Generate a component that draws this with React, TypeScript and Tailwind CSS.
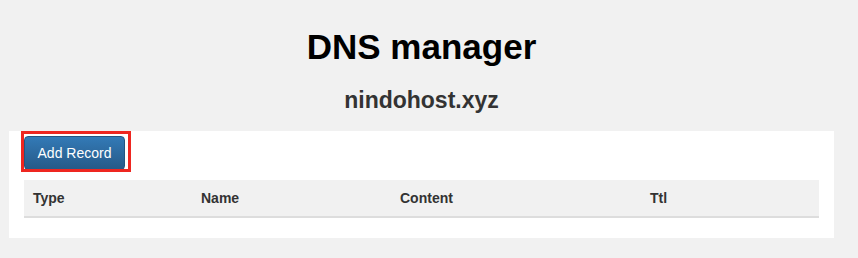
export default function App() {
  const cols = ['Type', 'Name', 'Content', 'Ttl'];

  return (
    <main className="min-h-[258px] bg-[#f1f1f1] font-['Liberation_Sans',Arial,sans-serif] text-[#333]">
      <div className="w-[843px]">
        <h1 className="pt-[28px] text-center text-[35px] leading-[38px] font-bold text-black">DNS manager</h1>
        <h3 className="mt-[21px] text-center text-[23px] leading-[26px] font-bold text-[#333]">nindohost.xyz</h3>

        <div className="relative mt-[18px] ml-[9px] w-[825px] bg-white px-[15px] pt-[5px] pb-[20px]">
          <button className="h-[34px] w-[101px] rounded-[4px] border border-[#245580] bg-gradient-to-b from-[#337ab7] to-[#265a88] text-[14px] text-white">
            Add Record
          </button>

          {/* highlight box drawn over the button */}
          <div className="absolute left-[12px] top-0 h-[41px] w-[110px] border-[3px] border-[#ee2620]" />

          <div className="mt-[10px] grid grid-cols-[168px_199px_250px_178px] border-b-2 border-[#dddddd] bg-[#f1f1f1]">
            {cols.map(c => (
              <div key={c} className="px-[9px] py-[8px] text-[14px] leading-[20px] font-bold text-[#333]">
                {c}
              </div>
            ))}
          </div>
        </div>
      </div>
    </main>
  );
}
